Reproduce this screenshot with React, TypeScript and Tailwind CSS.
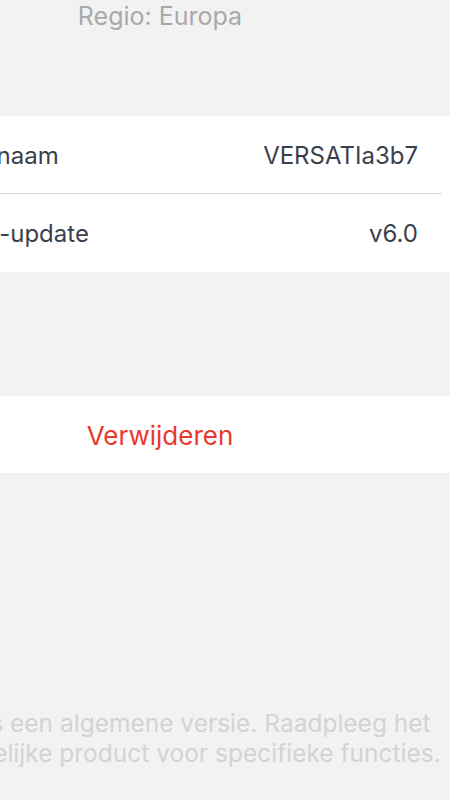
const rows = [
  { label: "Apparaatnaam", value: "VERSATIa3b7" },
  { label: "Firmware-update", value: "v6.0" },
];

export default function App() {
  return (
    <div
      className="h-[800px] w-[450px] overflow-hidden bg-[#f2f2f2]"
      style={{ fontFamily: "Inter, 'Noto Sans', sans-serif" }}
    >
      <div className="ml-[-130px] flex h-full w-[580px] flex-col">
        <p className="mt-[-2px] text-center text-[25px] leading-[36px] text-[#a9a9a9]">
          Regio: Europa
        </p>

        <div className="mt-[82px] bg-white">
          {rows.map((row, i) => (
            <div key={row.label} className="pl-[23px]">
              <div
                className={`flex h-[78px] items-center justify-between pt-[2px] text-[24px] text-[#3b3f4c] ${
                  i < rows.length - 1 ? "mr-[8px] border-b border-[#dcdcdc] pr-[24px]" : "pr-[32px]"
                }`}
              >
                <span>{row.label}</span>
                <span>{row.value}</span>
              </div>
            </div>
          ))}
        </div>

        <button className="mt-[124px] flex h-[77px] items-center justify-center bg-white pt-[2px] text-[26px] text-[#e8392c]">
          Verwijderen
        </button>

        <div className="mt-[auto] mb-[32px] text-center text-[24.5px] leading-[30px] text-[#d3d3d3]">
          <p className="whitespace-nowrap">Dit item is een algemene versie. Raadpleeg het</p>
          <p className="whitespace-nowrap">daadwerkelijke product voor specifieke functies.</p>
        </div>
      </div>
    </div>
  );
}
